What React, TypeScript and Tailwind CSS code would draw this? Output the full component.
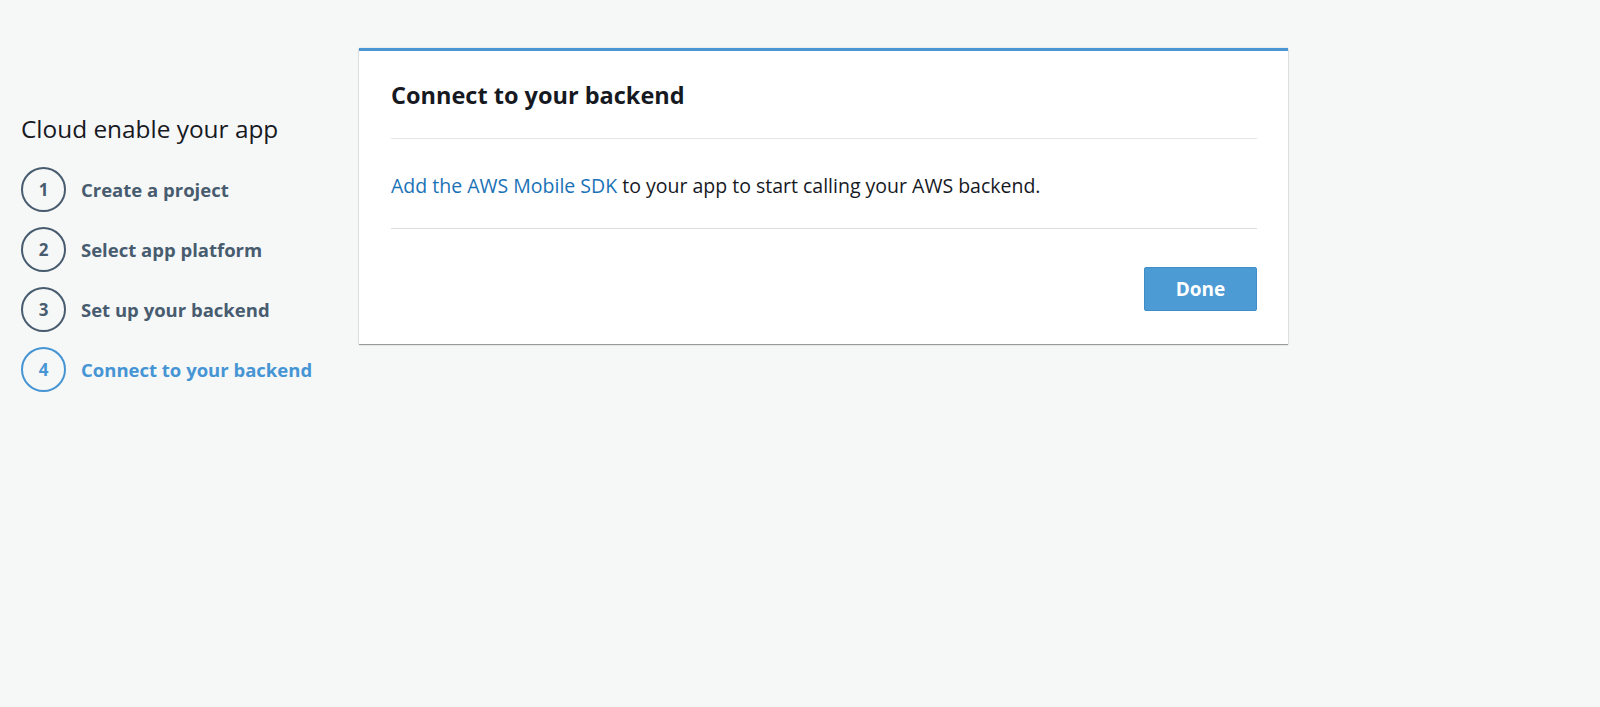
import React from "react";

const steps = [
  { n: 1, label: "Create a project" },
  { n: 2, label: "Select app platform" },
  { n: 3, label: "Set up your backend" },
  { n: 4, label: "Connect to your backend", active: true },
];

export default function App() {
  return (
    <div
      className="min-h-[707px] w-full bg-[#f6f7f7] text-[#16191f]"
      style={{ fontFamily: "'Open Sans', Lato, sans-serif" }}
    >
      <div className="flex items-start pt-[48px]">
        {/* Sidebar */}
        <aside className="w-[359px] shrink-0 pl-[21px] pt-[65px]">
          <h2 className="text-[24.4px] leading-[32px] font-medium text-[#16191f]">
            Cloud enable your app
          </h2>
          <ul className="mt-[22px] flex flex-col gap-[15px]">
            {steps.map((s) => (
              <li key={s.n} className="flex items-center gap-[15px]">
                <span
                  className={`flex h-[45px] w-[45px] items-center justify-center rounded-full border-[2.5px] text-[17px] font-bold ${
                    s.active
                      ? "border-[#4595d4] text-[#4595d4]"
                      : "border-[#485c6f] text-[#485c6f]"
                  }`}
                >
                  {s.n}
                </span>
                <span
                  className={`text-[18.5px] font-bold ${
                    s.active ? "text-[#4595d4]" : "text-[#485c6f]"
                  }`}
                >
                  {s.label}
                </span>
              </li>
            ))}
          </ul>
        </aside>

        {/* Card */}
        <section className="w-[929px] border-t-[3px] border-[#4a96d3] bg-white shadow-[0_1px_1px_rgba(0,0,0,0.35),0_0_2px_rgba(0,0,0,0.12)]">
          <div className="pl-[32px] pr-[31px]">
            <div className="border-b border-[#e6e7e8] pt-[28px] pb-[27px]">
              <h1 className="text-[23.5px] leading-[32px] font-bold text-[#16191f]">
                Connect to your backend
              </h1>
            </div>
            <div className="border-b border-[#dcdddf] pt-[33px] pb-[28px]">
              <p className="text-[19.5px] leading-[28px]">
                <a className="text-[#1a72b6]" href="#">
                  Add the AWS Mobile SDK
                </a>{" "}
                to your app to start calling your AWS backend.
              </p>
            </div>
            <div className="flex justify-end pt-[38px] pb-[33px]">
              <button className="h-[44px] w-[113px] rounded-[2px] border border-[#3f8dc9] bg-[#4d9bd4] text-[19px] font-bold text-white">
                Done
              </button>
            </div>
          </div>
        </section>
      </div>
    </div>
  );
}
